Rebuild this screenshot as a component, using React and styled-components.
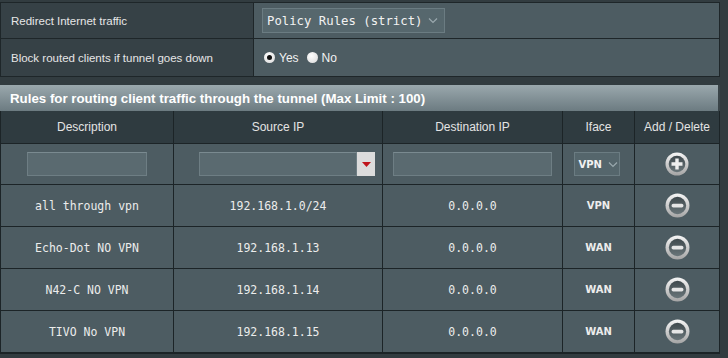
import React from "react";
import styled, { createGlobalStyle } from "styled-components";

const Global = createGlobalStyle`
  html, body { margin: 0; padding: 0; background: #323c40; }
  body { font-family: "Liberation Sans", Arial, sans-serif; }
  * { box-sizing: border-box; }
`;

const Page = styled.div`
  width: 728px;
  height: 358px;
  overflow: hidden;
  padding-top: 2px;
  background: #323c40;
`;

const Settings = styled.div`
  width: 720px;
  display: grid;
  grid-template-columns: 252px 1fr;
  background: #1e2629;
  gap: 1px;
  border: 1px solid #1e2629;
`;

const Label = styled.div`
  height: ${(p) => p.$h}px;
  background: #364146;
  color: #e6e6e6;
  font-size: 11.5px;
  display: flex;
  align-items: center;
  padding-left: 10px;
`;

const Value = styled.div`
  height: ${(p) => p.$h}px;
  background: #4d5c62;
  display: flex;
  align-items: center;
  padding-left: ${(p) => p.$pad}px;
  color: #f0f0f0;
  font-size: 12px;
`;

const Select = styled.div`
  display: flex;
  align-items: center;
  gap: 6px;
  height: 25px;
  padding: 0 6px 0 4px;
  background: #56676d;
  border: 1px solid #6b7c82;
  color: #f2f2f2;
  font-family: "DejaVu Sans Mono", "Liberation Mono", monospace;
  font-size: 12.3px;
`;

const Chevron = () => (
  <svg width="10" height="7" viewBox="0 0 10 7">
    <path d="M1 1.5 L5 5.5 L9 1.5" fill="none" stroke="#9aa9ae" strokeWidth="1.2" />
  </svg>
);

const RadioGroup = styled.label`
  display: flex;
  align-items: center;
  gap: 4px;
  margin-right: 8px;
  font-size: 12px;
  color: #f2f2f2;
`;

const RadioDot = styled.span`
  width: 11px;
  height: 11px;
  border-radius: 50%;
  background: radial-gradient(circle at 40% 35%, #ffffff, #d8d8d8);
  display: flex;
  align-items: center;
  justify-content: center;
  &::after {
    content: "";
    width: 5px;
    height: 5px;
    border-radius: 50%;
    background: ${(p) => (p.$on ? "#111" : "transparent")};
  }
`;

const Rules = styled.div`
  width: 720px;
  margin-top: 8px;
`;

const TitleBar = styled.div`
  height: 26px;
  background: linear-gradient(#9aa8ad, #6c7b81);
  border-right: 2px solid #3a4448;
  color: #ffffff;
  font-weight: bold;
  font-size: 13.3px;
  display: flex;
  align-items: center;
  padding-left: 10px;
`;

const Grid = styled.div`
  display: grid;
  grid-template-columns: 172px 208px 179px 71px 1fr;
  gap: 1px;
  background: #1c2427;
  border: 1px solid #1c2427;
  border-top: none;
  border-bottom-width: 2px;
`;

const Head = styled.div`
  height: 32px;
  background: #2f3b40;
  color: #e4e4e4;
  font-size: 12px;
  display: flex;
  align-items: center;
  justify-content: center;
`;

const Cell = styled.div`
  height: ${(p) => p.$h || 40}px;
  background: #4d5c62;
  color: #ececec;
  font-family: ${(p) =>
    p.$iface
      ? '"DejaVu Sans", "Liberation Sans", sans-serif'
      : '"DejaVu Sans Mono", "Liberation Mono", monospace'};
  font-size: ${(p) => (p.$iface ? "10px" : "11.5px")};
  font-weight: ${(p) => (p.$iface ? "bold" : "normal")};
  display: flex;
  align-items: center;
  justify-content: center;
`;

const TextInput = styled.div`
  width: ${(p) => p.$w}px;
  height: 24px;
  background: #5a6a70;
  border: 1px solid #6e7e84;
  border-top-color: #7a8a90;
`;

const Combo = styled.div`
  display: flex;
  align-items: stretch;
  margin-left: 18px;
`;

const DropBtn = styled.div`
  width: 18px;
  height: 24px;
  background: #dcdcdc;
  display: flex;
  align-items: center;
  justify-content: center;
`;

const IfaceSelect = styled.div`
  width: 46px;
  height: 24px;
  display: flex;
  align-items: center;
  gap: 6px;
  padding-left: 4px;
  margin-right: 4px;
  background: #55666c;
  border: 1px solid #6b7c82;
  color: #f2f2f2;
  font-family: "DejaVu Sans", "Liberation Sans", sans-serif;
  font-size: 10px;
  font-weight: bold;
`;

const RoundIcon = ({ type, size = 24 }) => {
  const id = type + "g";
  return (
    <svg width={size} height={size} viewBox="0 0 24 24">
      <defs>
        <linearGradient id={id} x1="0" y1="0" x2="0" y2="1">
          <stop offset="0" stopColor="#f6f6f6" />
          <stop offset="1" stopColor="#a4a4a4" />
        </linearGradient>
        <linearGradient id={id + "i"} x1="0" y1="0" x2="0" y2="1">
          <stop offset="0" stopColor="#3f494d" />
          <stop offset="1" stopColor="#6a767a" />
        </linearGradient>
      </defs>
      <circle cx="12" cy="12" r="11.5" fill={`url(#${id})`} />
      <circle cx="12" cy="12" r="8.3" fill={`url(#${id}i)`} />
      {type === "plus" ? (
        <path d="M10.3 6.5h3.4v3.8h3.8v3.4h-3.8v3.8h-3.4v-3.8H6.5v-3.4h3.8z" fill="#eeeeee" />
      ) : (
        <rect x="6.3" y="10.2" width="11.4" height="3.6" rx="1.6" fill="#e6e6e6" />
      )}
    </svg>
  );
};

const rules = [
  ["all through vpn", "192.168.1.0/24", "0.0.0.0", "VPN"],
  ["Echo-Dot NO VPN", "192.168.1.13", "0.0.0.0", "WAN"],
  ["N42-C NO VPN", "192.168.1.14", "0.0.0.0", "WAN"],
  ["TIVO No VPN", "192.168.1.15", "0.0.0.0", "WAN"],
];

export default function App() {
  return (
    <Page>
      <Global />
      <Settings>
        <Label $h={35}>Redirect Internet traffic</Label>
        <Value $h={35} $pad={8}>
          <Select>
            Policy Rules (strict) <Chevron />
          </Select>
        </Value>
        <Label $h={37}>Block routed clients if tunnel goes down</Label>
        <Value $h={37} $pad={10}>
          <RadioGroup>
            <RadioDot $on /> Yes
          </RadioGroup>
          <RadioGroup>
            <RadioDot /> No
          </RadioGroup>
        </Value>
      </Settings>
      <Rules>
        <TitleBar>Rules for routing client traffic through the tunnel (Max Limit : 100)</TitleBar>
        <Grid>
          <Head>Description</Head>
          <Head>Source IP</Head>
          <Head>Destination IP</Head>
          <Head>Iface</Head>
          <Head>Add / Delete</Head>

          <Cell>
            <TextInput $w={120} />
          </Cell>
          <Cell>
            <Combo>
              <TextInput $w={158} />
              <DropBtn>
                <svg width="9" height="5" viewBox="0 0 9 5">
                  <path d="M0 0h9L4.5 5z" fill="#c0141c" />
                </svg>
              </DropBtn>
            </Combo>
          </Cell>
          <Cell>
            <TextInput $w={159} />
          </Cell>
          <Cell>
            <IfaceSelect>
              VPN <Chevron />
            </IfaceSelect>
          </Cell>
          <Cell>
            <RoundIcon type="plus" size={24} />
          </Cell>

          {rules.map((r, i) => (
            <React.Fragment key={i}>
              <Cell $h={41}>{r[0]}</Cell>
              <Cell $h={41}>{r[1]}</Cell>
              <Cell $h={41}>{r[2]}</Cell>
              <Cell $h={41} $iface>
                {r[3]}
              </Cell>
              <Cell $h={41}>
                <RoundIcon type="minus" size={25} />
              </Cell>
            </React.Fragment>
          ))}
        </Grid>
      </Rules>
    </Page>
  );
}
